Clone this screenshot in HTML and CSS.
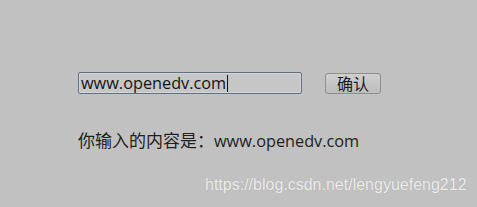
FILE: index.html
```html
<!DOCTYPE html>
<html lang="zh-CN">
<head>
    <meta charset="UTF-8">
    <title>输入演示</title>
    <link rel="stylesheet" href="styles.css">
</head>
<body>
    <div class="panel">
        <div class="input-row">
            <div class="text-box">
                <span class="typed">www.openedv.com</span><span class="caret"></span>
            </div>
            <button class="confirm-btn">确认</button>
        </div>
        <p class="result"><span class="label">你输入的内容是：</span>www.openedv.com</p>
    </div>
    <div class="watermark">https://blog.csdn.net/lengyuefeng212</div>
</body>
</html>
```

FILE: styles.css
```css
body {
    margin: 0;
    width: 477px;
    height: 207px;
    background: #c1c1c1;
    font-family: 'Open Sans', 'Noto Sans CJK SC', sans-serif;
    color: #1e1e1e;
    overflow: hidden;
}

.panel {
    padding: 72px 0 0 78px;
}

.input-row {
    display: flex;
    align-items: center;
}

.text-box {
    box-sizing: border-box;
    width: 224px;
    height: 22px;
    border: 1px solid #5f7284;
    border-radius: 2px;
    background: #c6c6c6;
    box-shadow: inset 0 0 0 1px #d4d4d4;
    display: flex;
    align-items: center;
    padding-left: 2px;
    font-size: 16.3px;
    color: #151515;
}

.caret {
    width: 1px;
    height: 17px;
    background: #111;
    margin-left: 1px;
}

.confirm-btn {
    box-sizing: border-box;
    margin-left: 23px;
    width: 56px;
    height: 21px;
    padding: 0;
    border: 1px solid #8e8e8e;
    border-radius: 3px;
    background: linear-gradient(#cfcfcf, #bdbdbd);
    font-family: 'Noto Sans CJK SC', sans-serif;
    font-size: 16px;
    color: #1a1a1a;
    line-height: 19px;
}

.result {
    margin: 33px 0 0;
    font-size: 16.3px;
    color: #222;
}

.label {
    font-size: 17px;
}

.watermark {
    position: absolute;
    left: 205px;
    top: 176px;
    font-family: 'Liberation Sans', Arial, sans-serif;
    font-size: 16px;
    color: #ececec;
    text-shadow: 0 0 1px #a0a0a0;
}
```
